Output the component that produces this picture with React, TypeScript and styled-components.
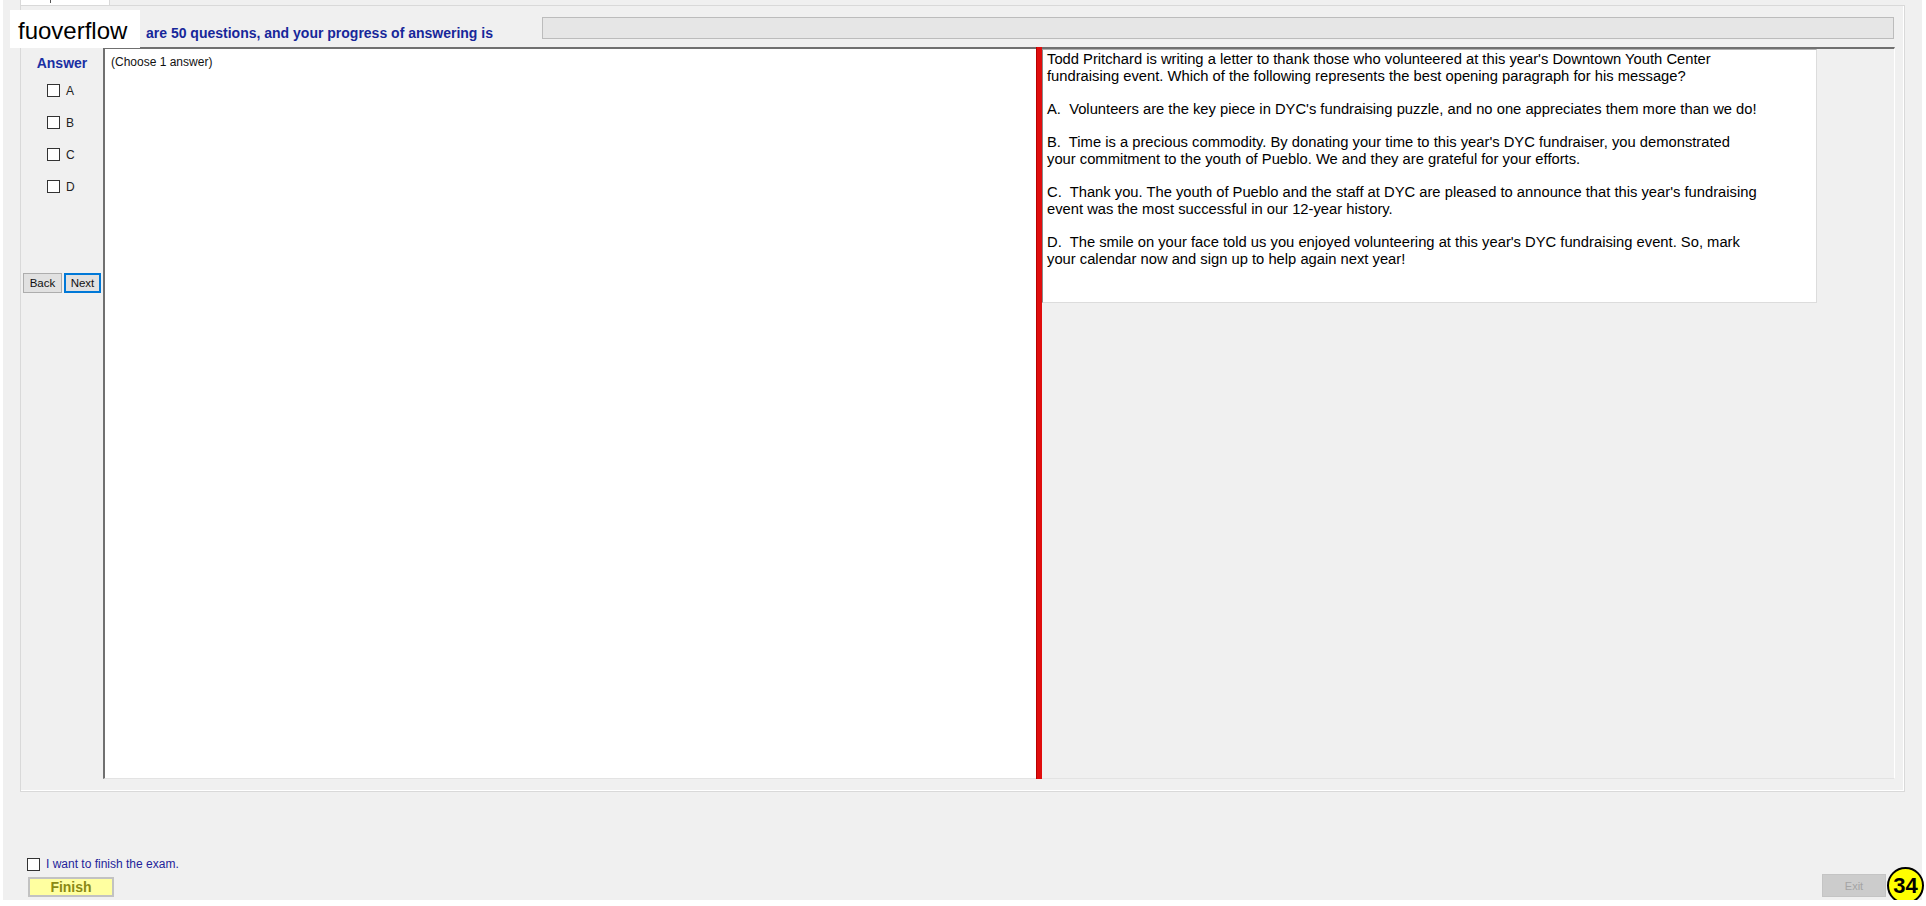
import React from "react";
import styled, { createGlobalStyle } from "styled-components";

const Global = createGlobalStyle`
  html, body { margin: 0; padding: 0; background: #ffffff; }
  body { font-family: "Liberation Sans", Arial, sans-serif; }
  * { box-sizing: border-box; }
`;

const Window = styled.div`
  position: relative;
  margin-left: 3px;
  width: 1919px;
  height: 900px;
  background: #f0f0f0;
  display: flex;
  flex-direction: column;
`;

const TabControl = styled.div`
  margin-left: 17px;
  width: 1885px;
  height: 792px;
  display: flex;
  flex-direction: column;
`;

const TabStrip = styled.div`
  height: 5px;
  display: flex;
`;

const Tab = styled.div`
  width: 90px;
  height: 5px;
  background: #ffffff;
  border-left: 1px solid #d9d9d9;
  border-right: 1px solid #d9d9d9;
  padding-left: 29px;
`;

const TabMark = styled.span`
  display: block;
  width: 1px;
  height: 3px;
  background: #555;
`;

const Page = styled.div`
  flex: 1;
  display: flex;
  flex-direction: column;
  border: 1px solid #d9d9d9;
  box-shadow: inset 0 -1px 0 #ffffff, inset -1px 0 0 #ffffff;
`;

const Header = styled.div`
  height: 41px;
  display: flex;
  align-items: flex-start;
  padding-left: 125px;
`;

const HeaderLabel = styled.div`
  padding-top: 19px;
  font-size: 14px;
  line-height: 16px;
  font-weight: bold;
  color: #17279a;
  white-space: nowrap;
`;

const Progress = styled.div`
  margin-left: auto;
  margin-right: 10px;
  margin-top: 11px;
  width: 1352px;
  height: 22px;
  background: #e6e6e6;
  border: 1px solid #bcbcbc;
`;

const Body = styled.div`
  flex: 1;
  display: flex;
`;

const Sidebar = styled.div`
  width: 82px;
  display: flex;
  flex-direction: column;
  padding-top: 8px;
`;

const AnswerTitle = styled.div`
  text-align: center;
  font-size: 14px;
  line-height: 16px;
  font-weight: bold;
  color: #1a2fa3;
`;

const Choices = styled.div`
  display: flex;
  flex-direction: column;
  gap: 19px;
  margin-top: 13px;
  padding-left: 26px;
`;

const ChoiceRow = styled.label`
  display: flex;
  align-items: center;
  gap: 6px;
  height: 13px;
  font-size: 12px;
  color: #222;
`;

const Box = styled.span`
  display: inline-block;
  width: 13px;
  height: 13px;
  background: #ffffff;
  border: 1px solid #333333;
`;

const NavRow = styled.div`
  display: flex;
  gap: 2px;
  padding-left: 2px;
  margin-top: 80px;
`;

const NavButton = styled.button<{ $focused?: boolean }>`
  width: ${(p) => (p.$focused ? 37 : 39)}px;
  height: 20px;
  padding: 0;
  font-family: "Liberation Sans", Arial, sans-serif;
  font-size: 11.5px;
  color: #111;
  background: #e1e1e1;
  border: ${(p) => (p.$focused ? "2px solid #0078d7" : "1px solid #adadad")};
`;

const Split = styled.div`
  flex: 1;
  display: flex;
  margin-right: 9px;
  margin-bottom: 12px;
`;

const QuestionPane = styled.div`
  width: 933px;
  background: #ffffff;
  border-top: 2px solid #707070;
  border-left: 2px solid #707070;
  border-bottom: 1px solid #e3e3e3;
  padding: 5px 6px;
  font-size: 12px;
  line-height: 16px;
  color: #111;
`;

const Splitter = styled.div`
  width: 6px;
  background: #e00d0d;
  border-left: 1px solid #b80000;
`;

const RightPane = styled.div`
  flex: 1;
  border-top: 2px solid #707070;
  border-right: 1px solid #ffffff;
  border-bottom: 1px solid #e3e3e3;
  background: #f0f0f0;
`;

const Passage = styled.div`
  width: 775px;
  height: 254px;
  background: #ffffff;
  border-left: 1px solid #8a8a8a;
  border-top: 1px solid #b0b0b0;
  border-right: 1px solid #dcdcdc;
  border-bottom: 1px solid #dcdcdc;
  padding: 1px 4px;
  font-size: 14.75px;
  line-height: 16.67px;
  color: #000;
  white-space: pre;
`;

const Line = styled.div`
  min-height: 16.67px;
`;

const BottomBar = styled.div`
  flex: 1;
  display: flex;
  align-items: flex-end;
  padding: 0 36px 3px 24px;
`;

const FinishColumn = styled.div`
  display: flex;
  flex-direction: column;
  gap: 6px;
`;

const FinishCheck = styled.label`
  display: flex;
  align-items: center;
  gap: 6px;
  font-size: 12px;
  line-height: 13px;
  color: #24249a;
`;

const FinishButton = styled.button`
  margin-left: 1px;
  width: 86px;
  height: 20px;
  padding: 0;
  background: #ffffa0;
  border: 2px solid #c2c2c2;
  font-family: "Liberation Sans", Arial, sans-serif;
  font-weight: bold;
  font-size: 14px;
  color: #8a8a14;
`;

const ExitButton = styled.button`
  margin-left: auto;
  width: 64px;
  height: 23px;
  padding: 0;
  background: #cccccc;
  border: 1px solid #c4c4c4;
  font-family: "Liberation Sans", Arial, sans-serif;
  font-size: 11px;
  color: #a4a4a4;
`;

const Watermark = styled.div`
  position: absolute;
  left: 7px;
  top: 10px;
  width: 130px;
  height: 38px;
  background: #ffffff;
  padding-left: 8px;
  font-size: 24px;
  line-height: 42px;
  color: #000;
`;

const Badge = styled.div`
  position: absolute;
  left: 1884px;
  top: 867px;
  width: 37px;
  height: 37px;
  border-radius: 50%;
  background: #ffff00;
  border: 2px solid #000;
  display: flex;
  align-items: center;
  justify-content: center;
  font-weight: bold;
  font-size: 22px;
  color: #000;
`;

const passage: string[] = [
  "Todd Pritchard is writing a letter to thank those who volunteered at this year's Downtown Youth Center",
  "fundraising event. Which of the following represents the best opening paragraph for his message?",
  "",
  "A.  Volunteers are the key piece in DYC's fundraising puzzle, and no one appreciates them more than we do!",
  "",
  "B.  Time is a precious commodity. By donating your time to this year's DYC fundraiser, you demonstrated",
  "your commitment to the youth of Pueblo. We and they are grateful for your efforts.",
  "",
  "C.  Thank you. The youth of Pueblo and the staff at DYC are pleased to announce that this year's fundraising",
  "event was the most successful in our 12-year history.",
  "",
  "D.  The smile on your face told us you enjoyed volunteering at this year's DYC fundraising event. So, mark",
  "your calendar now and sign up to help again next year!",
];

export default function App() {
  return (
    <>
      <Global />
      <Window>
        <TabControl>
          <TabStrip>
            <Tab>
              <TabMark />
            </Tab>
          </TabStrip>
          <Page>
            <Header>
              <HeaderLabel>are 50 questions, and your progress of answering is</HeaderLabel>
              <Progress />
            </Header>
            <Body>
              <Sidebar>
                <AnswerTitle>Answer</AnswerTitle>
                <Choices>
                  {["A", "B", "C", "D"].map((c) => (
                    <ChoiceRow key={c}>
                      <Box />
                      {c}
                    </ChoiceRow>
                  ))}
                </Choices>
                <NavRow>
                  <NavButton>Back</NavButton>
                  <NavButton $focused>Next</NavButton>
                </NavRow>
              </Sidebar>
              <Split>
                <QuestionPane>(Choose 1 answer)</QuestionPane>
                <Splitter />
                <RightPane>
                  <Passage>
                    {passage.map((l, i) => (
                      <Line key={i}>{l}</Line>
                    ))}
                  </Passage>
                </RightPane>
              </Split>
            </Body>
          </Page>
        </TabControl>
        <BottomBar>
          <FinishColumn>
            <FinishCheck>
              <Box />
              I want to finish the exam.
            </FinishCheck>
            <FinishButton>Finish</FinishButton>
          </FinishColumn>
          <ExitButton disabled>Exit</ExitButton>
        </BottomBar>
        <Watermark>fuoverflow</Watermark>
        <Badge>34</Badge>
      </Window>
    </>
  );
}
